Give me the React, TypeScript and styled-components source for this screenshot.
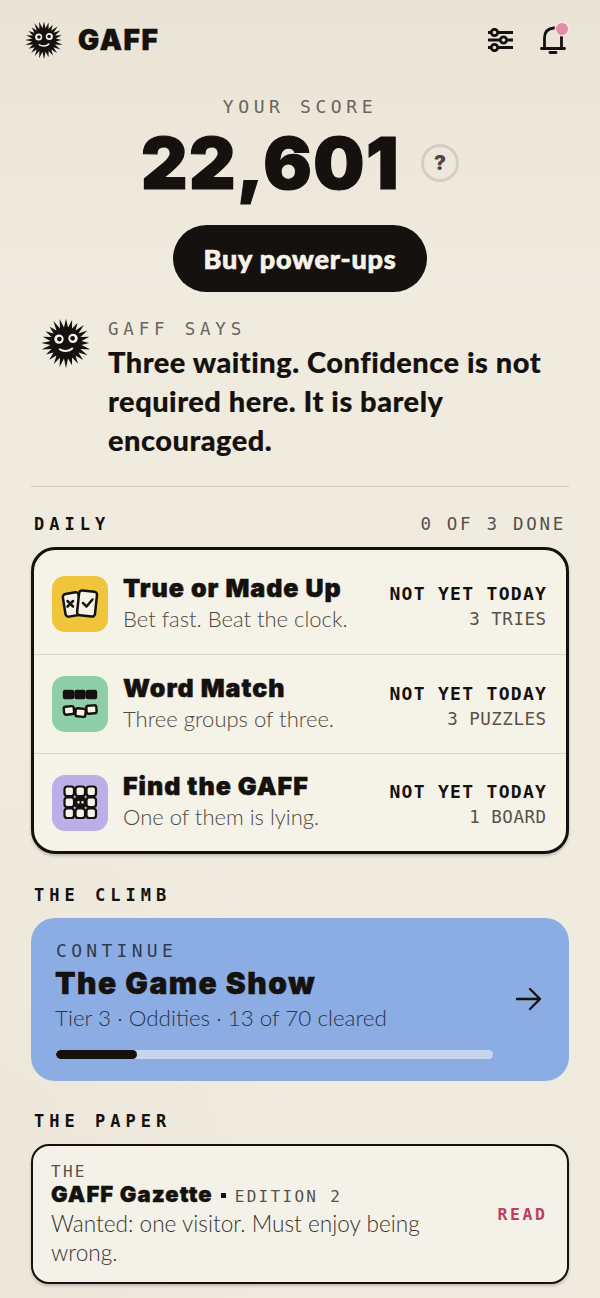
import styled, { createGlobalStyle } from 'styled-components'

const Global = createGlobalStyle`
  html, body {
    margin: 0;
    padding: 0;
    background: #efeadf;
  }
  * { box-sizing: border-box; }
`

const MONO = `"DejaVu Sans Mono", "Liberation Mono", monospace`
const HEAVY = `Inter, "Liberation Sans", sans-serif`
const BODY = `Lato, "Noto Sans", sans-serif`
const INK = '#14110e'

const Page = styled.div`
  width: 600px;
  height: 1298px;
  overflow: hidden;
  padding: 0 31px;
  background:
    linear-gradient(180deg, rgba(205, 198, 175, 0.2), transparent 22%),
    radial-gradient(ellipse at 0% 100%, rgba(200, 190, 165, 0.1), transparent 35%),
    #f0ebdf;
  color: ${INK};
`

const Header = styled.header`
  display: flex;
  align-items: center;
  justify-content: space-between;
  height: 80px;
  padding: 0 3px 1px 0;
`

const Brand = styled.div`
  display: flex;
  align-items: center;
  gap: 15px;
  margin-left: -6px;
`

const BrandName = styled.span`
  font-family: ${HEAVY};
  font-weight: 900;
  font-size: 28px;
  letter-spacing: 1.6px;
  -webkit-text-stroke: 0.5px ${INK};
`

const HeaderIcons = styled.div`
  display: flex;
  align-items: center;
  gap: 26px;
`

const BellWrap = styled.div`
  position: relative;
  width: 26px;
  height: 28px;
`

const BellDot = styled.span`
  position: absolute;
  top: -3px;
  right: -2px;
  width: 12px;
  height: 12px;
  border-radius: 50%;
  background: #e88aa6;
  box-shadow: 0 0 0 1.5px rgba(246, 232, 226, 0.8);
`

const Score = styled.section`
  display: flex;
  flex-direction: column;
  align-items: center;
`

const ScoreLabel = styled.div`
  margin-top: 16px;
  font-family: ${MONO};
  font-size: 18px;
  line-height: 22px;
  letter-spacing: 4.6px;
  color: #6a655c;
`

const ScoreRow = styled.div`
  display: flex;
  align-items: center;
  gap: 21px;
  margin-top: 2px;
`

const ScoreValue = styled.div`
  font-family: ${HEAVY};
  font-weight: 900;
  font-size: 72px;
  line-height: 86px;
  letter-spacing: 1.5px;
  -webkit-text-stroke: 1.2px ${INK};
`

const HelpBadge = styled.div`
  display: flex;
  align-items: center;
  justify-content: center;
  width: 38px;
  height: 38px;
  border: 3px solid #d3cec2;
  border-radius: 50%;
  font-family: ${HEAVY};
  font-weight: 900;
  font-size: 20px;
  color: #4d4943;
`

const BuyButton = styled.button`
  width: 254px;
  height: 67px;
  margin-top: 19px;
  border: 0;
  border-radius: 34px;
  background: ${INK};
  color: #f6f2e8;
  font-family: ${BODY};
  font-weight: 900;
  font-size: 27px;
  letter-spacing: 0.8px;
  -webkit-text-stroke: 0.7px #f6f2e8;
`

const Says = styled.section`
  display: flex;
  gap: 17px;
  margin-top: 26px;
  padding: 0 11px 27px 10px;
  border-bottom: 1px solid #d0cbbf;
`

const SaysText = styled.div`
  flex: 1;
`

const SaysLabel = styled.div`
  font-family: ${MONO};
  font-size: 17.5px;
  letter-spacing: 4.8px;
  line-height: 22px;
  color: #6a655c;
`

const SaysQuote = styled.p`
  margin: 2px 0 0;
  font-family: ${BODY};
  font-weight: 900;
  font-size: 29px;
  line-height: 39px;
  letter-spacing: 0.5px;
  -webkit-text-stroke: 0.2px ${INK};
`

const SectionHead = styled.div<{ $top: number }>`
  display: flex;
  justify-content: space-between;
  margin: ${({ $top }) => $top}px 3px 12px;
  font-family: ${MONO};
  font-size: 17px;
  line-height: 22px;
`

const SectionTitle = styled.span`
  font-weight: 700;
  letter-spacing: 5px;
`

const SectionNote = styled.span`
  font-size: 17.5px;
  letter-spacing: 2.7px;
  color: #56514a;
`

const DailyCard = styled.div`
  border: 3px solid ${INK};
  border-radius: 24px;
  background: #f5f2e8;
  box-shadow: 0 2px 3px rgba(60, 50, 30, 0.25);
  overflow: hidden;
`

const DailyRow = styled.div`
  display: flex;
  align-items: center;
  height: 99px;
  padding: 0 20px 0 18px;
  border-bottom: 1px solid #d9d5ca;

  &:first-child {
    height: 105px;
    padding-top: 4px;
  }

  &:last-child {
    border-bottom: 0;
    height: 97px;
  }
`

const GameIcon = styled.div<{ $bg: string }>`
  display: flex;
  align-items: center;
  justify-content: center;
  flex: none;
  width: 56px;
  height: 56px;
  border-radius: 13px;
  background: ${({ $bg }) => $bg};
`

const GameText = styled.div`
  flex: 1;
  margin-left: 15px;
  padding-bottom: 3px;
`

const GameName = styled.div`
  font-family: ${HEAVY};
  font-weight: 900;
  font-size: 25px;
  line-height: 30px;
  letter-spacing: 1px;
  -webkit-text-stroke: 0.5px ${INK};
`

const GameSub = styled.div`
  margin-top: 2px;
  font-family: ${BODY};
  font-weight: 300;
  font-size: 22px;
  line-height: 28px;
  color: #4d4943;
`

const GameMeta = styled.div`
  padding-top: 3px;
  text-align: right;
  font-family: ${MONO};
`

const MetaStatus = styled.div`
  margin-right: -1.2px;
  font-weight: 700;
  font-size: 18px;
  line-height: 24px;
  letter-spacing: 1.3px;
`

const MetaCount = styled.div`
  margin-top: 2px;
  margin-right: -0.5px;
  font-size: 17.5px;
  line-height: 22px;
  letter-spacing: 0.5px;
  color: #56514a;
`

const ClimbCard = styled.div`
  display: grid;
  grid-template-columns: 1fr auto;
  align-items: center;
  height: 163px;
  padding: 22px 26px 22px 25px;
  border-radius: 24px;
  background: #8cade3;
`

const ClimbLabel = styled.div`
  font-family: ${MONO};
  font-size: 18px;
  line-height: 22px;
  letter-spacing: 4.3px;
  color: #2f3b50;
`

const ClimbName = styled.div`
  margin-top: 3px;
  margin-left: -1px;
  font-family: ${HEAVY};
  font-weight: 900;
  font-size: 30px;
  line-height: 36px;
  letter-spacing: 1.5px;
  -webkit-text-stroke: 0.5px ${INK};
`

const ClimbSub = styled.div`
  margin-top: 2px;
  margin-left: -1px;
  font-family: ${BODY};
  font-weight: 300;
  font-size: 22.4px;
  line-height: 30px;
  color: #2b3446;
`

const ArrowSlot = styled.div`
  display: flex;
  margin-top: 24px;
`

const Track = styled.div`
  grid-column: 1 / -1;
  width: 437px;
  height: 9px;
  margin-top: 17px;
  border-radius: 5px;
  background: #c6d6f0;
  overflow: hidden;
`

const TrackFill = styled.div`
  height: 100%;
  border-radius: 5px;
  background: ${INK};
`

const PaperCard = styled.div`
  display: flex;
  align-items: center;
  height: 140px;
  padding: 0 22px 0 18px;
  border: 2px solid ${INK};
  border-radius: 18px;
  background: #f4f1e8;
  box-shadow: 0 2px 3px rgba(60, 50, 30, 0.25);
`

const PaperText = styled.div`
  flex: 1;
`

const PaperThe = styled.div`
  font-family: ${MONO};
  font-size: 16px;
  line-height: 19px;
  letter-spacing: 2.3px;
  color: #56514a;
`

const PaperTitle = styled.div`
  display: flex;
  align-items: baseline;
  font-family: ${HEAVY};
  font-weight: 900;
  font-size: 22px;
  line-height: 27px;
  letter-spacing: 1.1px;
  -webkit-text-stroke: 0.4px ${INK};
`

const PaperDot = styled.span`
  align-self: center;
  width: 5px;
  height: 5px;
  margin: 0 9px 0 8px;
  background: ${INK};
`

const PaperEdition = styled.span`
  font-family: ${MONO};
  font-weight: 400;
  font-size: 16px;
  letter-spacing: 2.3px;
  color: #56514a;
  -webkit-text-stroke: 0;
`

const PaperSub = styled.div`
  width: 400px;
  margin-top: -1px;
  font-family: ${BODY};
  font-weight: 300;
  font-size: 22.6px;
  line-height: 29px;
  color: #38342e;
`

const ReadLink = styled.span`
  margin-right: -2.6px;
  font-family: ${MONO};
  font-weight: 700;
  font-size: 16.5px;
  letter-spacing: 2.6px;
  color: #c23b62;
`

const spikes = (n: number, r1: number, r2: number) => {
  const pts: string[] = []
  for (let i = 0; i < n * 2; i++) {
    const jitter = i % 2 === 0 ? ((i * 7) % 5) * 0.7 - 1.4 : 0
    const r = i % 2 === 0 ? r1 + jitter : r2
    const a = (i / (n * 2)) * Math.PI * 2
    pts.push(`${(32 + r * Math.cos(a)).toFixed(1)},${(32 + r * Math.sin(a)).toFixed(1)}`)
  }
  return pts.join(' ')
}

const Mascot = ({ size }: { size: number }) => (
  <svg width={size} height={size} viewBox="0 0 64 64">
    <polygon points={spikes(24, 31, 20)} fill={INK} />
    <circle cx="23" cy="27" r="6" fill="#f5f2e8" />
    <circle cx="41" cy="26" r="6" fill="#f5f2e8" />
    <circle cx="23.5" cy="27" r="3" fill={INK} />
    <circle cx="40.5" cy="26" r="3" fill={INK} />
    <path d="M24 40c4 3 12 3 16-1" fill="none" stroke="#f5f2e8" strokeWidth="2.6" strokeLinecap="round" />
  </svg>
)

const SlidersIcon = () => (
  <svg width="27" height="24" viewBox="0 0 27 24" fill="none" stroke={INK} strokeWidth="2.8">
    <path d="M1 4.500h3M11 4.500h15M1 12h12M20 12h6M1 19.500h3M11 19.500h15" />
    <circle cx="7.500" cy="4.500" r="3.200" />
    <circle cx="16.500" cy="12" r="3.200" />
    <circle cx="7.500" cy="19.500" r="3.200" />
  </svg>
)

const BellIcon = () => (
  <svg width="26" height="28" viewBox="0 0 26 28" fill="none" stroke={INK} strokeWidth="2.8" strokeLinecap="round" strokeLinejoin="round">
    <path d="M4.500 22V12C4.500 6 8 2.500 14 2" />
    <path d="M21.500 11v11" />
    <path d="M1.500 22.500h23" />
    <path d="M10 26.500h6" />
  </svg>
)

const ArrowIcon = () => (
  <svg width="28" height="24" viewBox="0 0 28 24" fill="none" stroke={INK} strokeWidth="2.4" strokeLinecap="round" strokeLinejoin="round">
    <path d="M2 12h23M15 2l10 10-10 10" />
  </svg>
)

const CardsIcon = () => (
  <svg width="38" height="32" viewBox="0 0 38 32" fill="none" stroke={INK} strokeWidth="2.5" strokeLinejoin="round" strokeLinecap="round">
    <rect x="3" y="5" width="16" height="23" rx="3" transform="rotate(-9 11 16)" fill="#f5f2e8" />
    <rect x="17" y="3" width="18" height="25" rx="3" transform="rotate(6 26 16)" fill="#f5f2e8" />
    <path d="M6.500 13l5.500 5.500M12 13l-5.500 5.500" />
    <path d="M22 15l3.500 3.500 6-7" />
  </svg>
)

const MatchIcon = () => (
  <svg width="36" height="30" viewBox="0 0 36 30" stroke={INK} strokeWidth="2.4" strokeLinejoin="round">
    <rect x="2" y="2" width="9" height="7" rx="1" fill={INK} />
    <rect x="13.500" y="2" width="9" height="7" rx="1" fill={INK} />
    <rect x="25" y="2" width="9" height="7" rx="1" fill={INK} />
    <rect x="2" y="17.500" width="10" height="8" rx="2" fill="#f5f2e8" transform="rotate(-6 6 22)" />
    <rect x="13.500" y="19.500" width="10" height="8" rx="2" fill="#f5f2e8" transform="rotate(6 18 24)" />
    <rect x="24.500" y="16.500" width="10" height="8" rx="2" fill="#f5f2e8" transform="rotate(-4 30 21)" />
  </svg>
)

const GridIcon = () => {
  const cells = [1.5, 12.5, 23.5]
  return (
    <svg width="35" height="35" viewBox="0 0 35 35" stroke={INK} strokeWidth="2.2">
      {cells.flatMap((y) =>
        cells.map((x) => (
          <rect key={`${x}-${y}`} x={x} y={y} width="9.500" height="9.500" rx="2.800" fill={x === 12.5 && y === 12.5 ? INK : '#f5f2e8'} />
        )),
      )}
      <rect x="14.500" y="16" width="2" height="2.500" fill="#f5f2e8" stroke="none" />
      <rect x="18.500" y="16" width="2" height="2.500" fill="#f5f2e8" stroke="none" />
    </svg>
  )
}

const games = [
  { name: 'True or Made Up', sub: 'Bet fast. Beat the clock.', count: '3 TRIES', bg: '#f0c53c', icon: <CardsIcon /> },
  { name: 'Word Match', sub: 'Three groups of three.', count: '3 PUZZLES', bg: '#8fcfa8', icon: <MatchIcon /> },
  { name: 'Find the GAFF', sub: 'One of them is lying.', count: '1 BOARD', bg: '#bcaee6', icon: <GridIcon /> },
]

export default function App() {
  return (
    <Page>
      <Global />
      <Header>
        <Brand>
          <Mascot size={38} />
          <BrandName>GAFF</BrandName>
        </Brand>
        <HeaderIcons>
          <SlidersIcon />
          <BellWrap>
            <BellIcon />
            <BellDot />
          </BellWrap>
        </HeaderIcons>
      </Header>

      <Score>
        <ScoreLabel>YOUR SCORE</ScoreLabel>
        <ScoreRow>
          <ScoreValue>22,601</ScoreValue>
          <HelpBadge>?</HelpBadge>
        </ScoreRow>
        <BuyButton>Buy power-ups</BuyButton>
      </Score>

      <Says>
        <Mascot size={50} />
        <SaysText>
          <SaysLabel>GAFF SAYS</SaysLabel>
          <SaysQuote>Three waiting. Confidence is not required here. It is barely encouraged.</SaysQuote>
        </SaysText>
      </Says>

      <SectionHead $top={26}>
        <SectionTitle>DAILY</SectionTitle>
        <SectionNote>0 OF 3 DONE</SectionNote>
      </SectionHead>
      <DailyCard>
        {games.map((g) => (
          <DailyRow key={g.name}>
            <GameIcon $bg={g.bg}>{g.icon}</GameIcon>
            <GameText>
              <GameName>{g.name}</GameName>
              <GameSub>{g.sub}</GameSub>
            </GameText>
            <GameMeta>
              <MetaStatus>NOT YET TODAY</MetaStatus>
              <MetaCount>{g.count}</MetaCount>
            </GameMeta>
          </DailyRow>
        ))}
      </DailyCard>

      <SectionHead $top={30}>
        <SectionTitle>THE CLIMB</SectionTitle>
      </SectionHead>
      <ClimbCard>
        <div>
          <ClimbLabel>CONTINUE</ClimbLabel>
          <ClimbName>The Game Show</ClimbName>
          <ClimbSub>Tier 3 · Oddities · 13 of 70 cleared</ClimbSub>
        </div>
        <ArrowSlot>
          <ArrowIcon />
        </ArrowSlot>
        <Track>
          <TrackFill style={{ width: `${(13 / 70) * 100}%` }} />
        </Track>
      </ClimbCard>

      <SectionHead $top={29}>
        <SectionTitle>THE PAPER</SectionTitle>
      </SectionHead>
      <PaperCard>
        <PaperText>
          <PaperThe>THE</PaperThe>
          <PaperTitle>
            GAFF Gazette
            <PaperDot />
            <PaperEdition>EDITION 2</PaperEdition>
          </PaperTitle>
          <PaperSub>Wanted: one visitor. Must enjoy being wrong.</PaperSub>
        </PaperText>
        <ReadLink>READ</ReadLink>
      </PaperCard>
    </Page>
  )
}
